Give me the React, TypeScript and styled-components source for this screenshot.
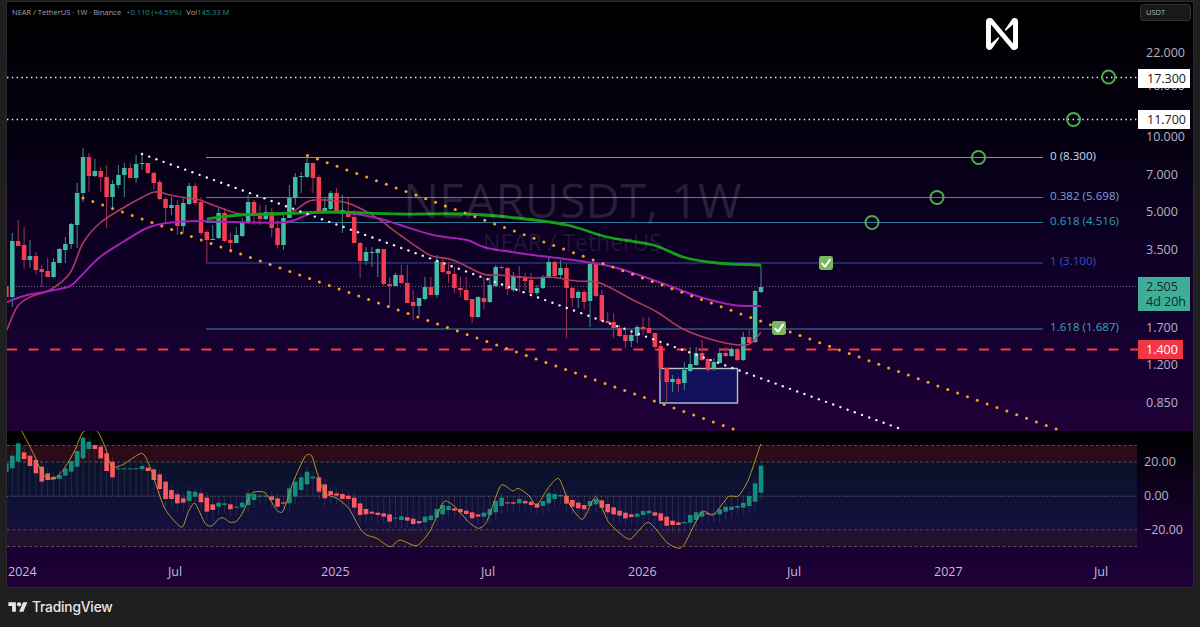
import React from "react";
import styled, { createGlobalStyle } from "styled-components";

const Global = createGlobalStyle`
  html, body { margin: 0; padding: 0; background: #1f1f1f; }
  #root { width: 1200px; height: 627px; overflow: hidden; }
`;

const FONT = `"Open Sans", "Noto Sans", sans-serif`;

const Page = styled.div`
  width: 1200px;
  height: 627px;
  box-sizing: border-box;
  padding: 2px 7px 0;
  display: flex;
  flex-direction: column;
  background: #1f1f1f;
  font-family: ${FONT};
`;
const Frame = styled.div`
  width: 1186px;
  height: 585px;
  display: flex;
  flex-direction: column;
  outline: 1px solid #2b2b2b;
`;
const MainPane = styled.section`
  height: 429px;
  display: flex;
  background: linear-gradient(180deg, #000 0%, #050010 30%, #10002a 65%, #1f0038 100%);
`;
const SubPane = styled.section`
  height: 156px;
  display: flex;
  flex-direction: column;
  background: linear-gradient(180deg, #000 0%, #0c0018 30%, #180030 65%, #1f0038 100%);
`;
const SubRow = styled.div`
  height: 127px;
  display: flex;
`;
const Plot = styled.div`
  position: relative;
  width: 1131px;
  flex: none;
  overflow: hidden;
`;
const Drawing = styled.svg`
  display: block;
  width: 100%;
  height: 100%;
`;
const Scale = styled.div`
  flex: 1;
  display: flex;
  flex-direction: column;
  color: #b6b3c2;
  font-size: 12.5px;
`;
const SubScale = styled(Scale)`
  padding: 25px 0 0 6px;
  gap: 22px;
`;
const Tick = styled.span<{ $mt?: number }>`
  margin: ${(p) => p.$mt ?? 0}px 0 0 8px;
  height: 12px;
  line-height: 12px;
  white-space: nowrap;
`;
const SubTick = styled.span`
  height: 12px;
  line-height: 12px;
  white-space: nowrap;
`;
const TickGroup = styled.div`
  display: flex;
  flex-direction: column;
  gap: 25.67px;
  padding-top: 2.5px;
`;
const HiddenTick = styled.span`
  height: 4.5px;
  margin: 0 0 18px 8px;
  overflow: hidden;
  display: flex;
  align-items: flex-end;
  line-height: 12px;
`;
const WhiteTag = styled.div<{ $mt?: number }>`
  margin-top: ${(p) => p.$mt ?? 0}px;
  width: 52px;
  height: 18.5px;
  flex: none;
  background: #fff;
  color: #131722;
  line-height: 19px;
  padding-left: 9px;
  box-sizing: border-box;
`;
const LastTag = styled.div`
  margin-top: 21px;
  width: 52px;
  height: 34px;
  flex: none;
  background: #3fae98;
  color: #0b2d2a;
  line-height: 15px;
  padding: 2px 0 0 8px;
  box-sizing: border-box;
`;
const RedTag = styled.div`
  margin-top: 6px;
  width: 45px;
  height: 19px;
  flex: none;
  background: #f23645;
  color: #fff;
  font-weight: 500;
  line-height: 19px;
  padding-left: 8px;
  box-sizing: border-box;
`;
const CurrencyBox = styled.div`
  margin: 2px 0 26px 2px;
  width: 51px;
  height: 17px;
  flex: none;
  box-sizing: border-box;
  background: #191919;
  border: 1px solid #313131;
  border-radius: 3px;
  color: #b8b8b8;
  font-size: 7.5px;
  line-height: 15px;
  padding-left: 5px;
`;
const Legend = styled.div`
  position: absolute;
  left: 5px;
  top: 5px;
  display: flex;
  gap: 5px;
  font-size: 7.5px;
  line-height: 11px;
  color: #a4a6ae;
  white-space: nowrap;
`;
const Up = styled.span`
  color: #2f8f7c;
`;
const Watermark = styled.div`
  position: absolute;
  left: 0;
  top: 174px;
  width: 1131px;
  text-align: center;
  color: rgba(255, 255, 255, 0.12);
  font-size: 47.5px;
  line-height: 48px;
  white-space: nowrap;
`;
const WatermarkSub = styled.div`
  position: absolute;
  left: 0;
  top: 228px;
  width: 1131px;
  text-align: center;
  color: rgba(255, 255, 255, 0.1);
  font-size: 23px;
  line-height: 24px;
  white-space: nowrap;
`;
const TimeAxis = styled.div`
  flex: 1;
  display: grid;
  grid-template-columns: 160px 153px 160px 147px 159px 147px 160px auto;
  padding: 5px 0 0 1px;
  color: #c3bcd6;
  font-size: 12.5px;
  line-height: 18px;
`;
const Footer = styled.footer`
  height: 40px;
  display: flex;
  align-items: center;
  gap: 4px;
  padding-left: 1px;
  color: #e6e6e6;
`;
const TvMark = styled.svg`
  width: 20px;
  height: 15px;
  fill: #e6e6e6;
`;
const TvWord = styled.span`
  font-family: Inter, sans-serif;
  font-weight: 500;
  font-size: 13.8px;
  letter-spacing: -0.2px;
`;

type P = [number, number];
const smooth = (pts: P[], k = 6) => {
  let d = `M${pts[0][0]} ${pts[0][1]}`;
  for (let i = 0; i < pts.length - 1; i++) {
    const p0 = pts[Math.max(0, i - 1)];
    const p1 = pts[i];
    const p2 = pts[i + 1];
    const p3 = pts[Math.min(pts.length - 1, i + 2)];
    const c1x = p1[0] + (p2[0] - p0[0]) / k;
    const c1y = p1[1] + (p2[1] - p0[1]) / k;
    const c2x = p2[0] - (p3[0] - p1[0]) / k;
    const c2y = p2[1] - (p3[1] - p1[1]) / k;
    d += `C${c1x.toFixed(1)} ${c1y.toFixed(1)} ${c2x.toFixed(1)} ${c2y.toFixed(1)} ${p2[0]} ${p2[1]}`;
  }
  return d;
};

// colour (1 up, 0 down), wick top, body top, body bottom, wick bottom
const candles: [number, number, number, number, number][] = [
  [0,282,286,297,300],[1,233,241,297,307],[0,220,241,246,246],[0,227,245,260,269],[1,240,256,260,268],[0,252,256,270,274],[0,265,269,272,287],[0,258,271,277,277],[1,258,262,277,278],[1,248,249,263,263],[1,237,244,250,263],[1,223,224,244,249],[1,183,193,225,248],[1,148,157,193,202],[0,153,157,176,192],[1,159,171,176,177],[0,167,171,177,192],[0,165,177,197,228],[1,180,184,197,210],[1,165,175,185,188],[1,163,168,175,197],[0,163,168,178,178],[1,155,164,178,183],[1,154,163,164,170],[0,163,163,173,174],[0,172,173,183,190],[0,180,182,199,200],[0,197,199,208,223],[1,197,205,208,215],[0,200,205,226,235],[1,198,203,226,233],[1,183,186,204,205],[0,183,186,203,205],[0,197,202,233,235],[0,230,232,240,263],[1,225,239,240,240],[1,207,213,238,239],[0,208,213,241,242],[0,233,240,243,253],[1,227,235,243,243],[1,218,223,236,237],[1,195,202,223,224],[0,200,202,214,225],[0,205,213,219,225],[1,205,212,219,220],[0,208,212,228,237],[0,220,228,245,248],[1,213,218,245,250],[1,185,198,218,218],[1,173,177,198,205],[1,172,176,177,193],[1,155,163,177,178],[0,163,163,178,193],[0,175,177,212,208],[1,198,208,211,213],[1,191,193,209,210],[0,188,193,211,213],[1,195,210,212,233],[0,198,212,217,217],[0,210,217,243,243],[0,242,243,261,278],[1,247,252,261,265],[1,247,252,253,267],[1,248,249,253,277],[0,249,249,284,286],[0,277,284,286,305],[1,273,275,286,286],[0,265,275,283,284],[0,265,283,303,303],[0,290,302,306,320],[1,298,298,306,315],[1,277,287,299,300],[0,277,287,295,295],[1,255,261,295,298],[0,257,262,272,273],[0,262,271,274,283],[0,267,274,288,293],[0,277,288,290,297],[0,277,290,300,301],[0,299,299,317,323],[1,296,297,317,318],[0,277,298,302,309],[1,277,285,302,303],[1,265,267,286,287],[0,266,267,268,270],[0,267,268,289,295],[1,272,276,290,292],[0,266,276,278,292],[0,273,278,281,290],[0,273,280,293,297],[1,285,288,293,295],[1,275,278,288,289],[1,256,262,278,278],[0,261,262,276,278],[1,260,268,275,278],[0,263,268,288,338],[0,287,288,298,307],[1,290,292,298,308],[0,290,292,302,309],[1,262,264,301,327],[0,262,264,296,297],[0,290,295,321,322],[0,312,321,323,323],[0,313,322,328,338],[0,325,328,336,337],[0,330,335,341,348],[1,330,335,341,347],[1,325,327,336,343],[0,317,327,329,335],[0,317,328,333,333],[0,333,333,347,348],[0,342,346,368,380],[0,367,368,382,402],[1,375,379,382,392],[0,377,379,384,392],[1,362,370,383,390],[1,347,364,371,372],[1,347,353,365,366],[0,340,353,360,361],[0,358,359,370,372],[1,358,362,368,371],[1,348,353,363,363],[0,347,353,356,357],[1,347,349,356,357],[0,348,349,360,361],[1,332,337,360,361],[0,330,337,343,343],[1,290,291,342,343],[1,265,287,292,293],
];

const toY = (z: number) => 425 + z / 3;
const rsi: [number, number, number][] = [
  [1,115,140],[1,92,130],[1,55,110],[0,82,102],[0,92,123],[0,105,145],[0,125,170],[0,145,165],[0,155,163],[1,150,162],[1,130,152],[1,108,140],[1,78,125],[1,38,100],[1,50,72],[0,60,72],[0,65,100],[0,85,138],[0,110,157],[1,130,133],[1,130,132],[1,130,132],[1,130,132],[1,123,133],[0,128,138],[0,133,165],[0,148,192],[0,170,222],[0,195,222],[0,208,235],[0,220,233],[1,198,228],[1,200,215],[0,205,232],[0,218,260],[0,238,255],[1,233,245],[1,235,240],[0,238,253],[1,245,248],[1,233,247],[1,205,240],[1,207,225],[1,212,215],[1,212,214],[0,214,225],[0,220,245],[0,232,236],[1,190,235],[1,170,215],[1,157,195],[1,140,178],[1,155,160],[0,157,200],[0,178,220],[0,198,210],[0,205,212],[0,207,222],[0,212,222],[0,218,248],[0,235,270],[0,252,268],[0,260,266],[0,263,270],[0,265,275],[0,268,290],[1,278,281],
  [1,274,285],[0,277,287],[0,281,297],[0,288,295],[1,275,292],[1,272,285],[1,252,278],[1,240,268],[1,243,255],[0,250,257],[0,252,262],[0,257,267],[0,262,280],[0,268,275],[1,263,275],[1,252,270],[1,228,262],[1,218,243],[0,232,235],[0,232,236],[1,222,235],[0,228,235],[0,230,240],[0,236,248],[1,228,243],[1,205,235],[1,207,222],[1,210,214],[0,212,236],[0,225,245],[0,233,250],[0,240,253],[1,228,243],[1,222,238],[0,226,248],[0,237,262],[0,247,268],[0,257,272],[0,263,280],[0,268,276],[1,266,275],[1,258,270],[1,257,265],[0,262,272],[0,265,287],[0,275,302],[0,287,300],[0,292,300],[1,291,295],[1,270,293],[1,262,285],[1,260,275],[0,265,268],[1,265,268],[1,253,268],[1,245,260],[1,245,255],[1,243,248],[1,233,248],[1,213,243],[1,175,230],[1,122,203],
];

const ma20: P[] = [[7,330],[17,307],[30,297],[50,290],[70,273],[83,243],[100,223],[123,208],[137,200],[155,192],[170,195],[187,198],[200,200],[213,205],[240,214],[267,215],[290,213],[307,202],[317,200],[337,201],[353,205],[377,218],[400,235],[417,247],[432,256],[453,260],[483,274],[500,275],[533,278],[550,277],[577,281],[600,283],[633,300],[657,312],[683,329],[717,341],[747,345],[761,332]];
const ma50: P[] = [[7,302],[27,295],[50,291],[70,286],[80,277],[100,257],[123,242],[147,228],[167,223],[200,221],[233,222],[287,222],[313,213],[347,213],[377,218],[400,225],[433,235],[467,240],[487,248],[533,255],[573,260],[617,268],[667,285],[700,297],[733,305],[761,306]];
const ma200: P[] = [[207,219],[240,215],[300,213],[333,212],[400,214],[467,214],[517,218],[567,225],[607,237],[653,245],[683,257],[717,263],[761,265]];

const z6: P[] = [[40,-40],[65,17],[100,85],[130,150],[160,162],[190,135],[225,75],[250,20],[290,17],[315,65],[335,125],[370,118],[425,85],[450,125],[480,215],[500,260],[545,307],[565,260],[585,235],[615,295],[635,303],[655,283],[670,278],[690,292],[710,288],[730,260],[755,205],[795,203],[830,255],[850,257],[880,170],[915,95],[935,93],[955,155],[975,205],[1010,220],[1045,248],[1080,310],[1100,330],[1130,340],[1170,365]];
const z7: P[] = [[0,345],[50,362],[90,318],[125,240],[140,228],[170,250],[205,290],[235,310],[260,290],[302,182],[338,198],[355,190],[385,210],[410,240],[440,195],[465,165],[480,165],[510,240],[548,283],[587,215],[625,290],[660,325],[692,342],[745,292],[800,352],[835,370],[855,355],[905,260],[940,270],[985,215],[1015,213],[1045,165],[1082,57]];
const rsiLine: P[] = [
  ...z6.map(([x, y]) => [+(x / 3).toFixed(1), +toY(y).toFixed(1)] as P),
  ...z7.map(([x, y]) => [+(400 + x / 3).toFixed(1), +toY(y).toFixed(1)] as P),
];

const dotsOn = (x0: number, y0: number, x1: number, y1: number, step: number) => {
  const out: P[] = [];
  const slope = (y1 - y0) / (x1 - x0);
  for (let x = x0; x <= x1; x += step) out.push([x, y0 + (x - x0) * slope]);
  return out;
};
const whiteDots = dotsOn(142, 154, 905, 430.5, 7.2);
const upperDots = dotsOn(307.5, 155.5, 1060, 430.5, 9.85);
const lowerDots = dotsOn(83, 198, 737, 430.5, 9.85);

const fibs = [
  { y: 157.5, line: "#8d90a2", text: "#c6dcec", label: "0 (8.300)" },
  { y: 197.5, line: "#65769e", text: "#7f9fd6", label: "0.382 (5.698)" },
  { y: 222.5, line: "#337a96", text: "#2e9cba", label: "0.618 (4.516)" },
  { y: 263, line: "#3a4da2", text: "#3450c4", label: "1 (3.100)" },
  { y: 329, line: "#3a8698", text: "#36a6b8", label: "1.618 (1.687)" },
];
const circles: P[] = [[1108.5, 77],[1073.5, 119.5],[978.5, 157.5],[937, 197.5],[872, 222.5]];
const checks: P[] = [[826, 263],[779, 328]];

const GREEN = "#3fbca4";
const RED = "#f23e50";
const TEAL = "#0f8f7e";
const SALMON = "#fb5a62";
const mainX = (i: number) => 761 - (candles.length - 1 - i) * ((761 - 12.3) / (candles.length - 2));
const subX = (i: number) => 761 - (rsi.length - 1 - i) * ((761 - 12.3) / (rsi.length - 2));

const NearLogo = () => (
  <path
    transform="translate(986 18) scale(0.3556)"
    fill="#fff"
    d="M72.2 4.6L53.4 32.5c-1.3 1.9 1.2 4.2 3 2.6L74.9 19c.5-.4 1.2-.1 1.2.6v50.3c0 .7-.9 1-1.3.5l-56-67C17 1.2 14.4 0 11.5 0h-2C4.3 0 0 4.3 0 9.6v70.8C0 85.7 4.3 90 9.6 90c3.3 0 6.4-1.7 8.2-4.6l18.8-27.9c1.3-1.9-1.2-4.2-3-2.6L15.1 70.9c-.5.4-1.2.1-1.2-.6V20.1c0-.7.9-1 1.3-.5l56 67c1.8 2.2 4.5 3.4 7.3 3.4h2c5.3 0 9.6-4.3 9.6-9.6V9.6C90 4.3 85.7 0 80.4 0c-3.4 0-6.5 1.7-8.2 4.6z"
  />
);

const MainDrawing = () => (
  <Drawing viewBox="7 2 1131 429">
    <rect x={660} y={368.5} width={77.5} height={34.5} fill="#12105a" stroke="#b4c2c6" strokeWidth={1.4} />
    <line x1={7} x2={1138} y1={77.5} y2={77.5} stroke="#f2f2f2" strokeWidth={1.3} strokeDasharray="1.4 3.4" />
    <line x1={7} x2={1138} y1={119.5} y2={119.5} stroke="#f2f2f2" strokeWidth={1.3} strokeDasharray="1.4 3.4" />
    <line x1={7} x2={1138} y1={286.5} y2={286.5} stroke="#8a8494" strokeWidth={0.8} strokeDasharray="1 2" />
    {fibs.map((f) => (
      <line key={f.y} x1={206} x2={1043} y1={f.y} y2={f.y} stroke={f.line} strokeWidth={1.1} />
    ))}
    {fibs.map((f) => (
      <text key={f.label} x={1050} y={f.y + 2} fill={f.text} fontSize={11.6} fontWeight={500} fontFamily={FONT}>
        {f.label}
      </text>
    ))}
    <line x1={7} x2={1138} y1={349.5} y2={349.5} stroke={RED} strokeWidth={1.8} strokeDasharray="10 11.6" />
    {candles.map(([up, wt, bt, bb, wb], i) => {
      const x = mainX(i);
      return (
        <g key={i}>
          <line x1={x} x2={x} y1={wt} y2={wb} stroke={up ? "#3a7f7e" : "#96304a"} strokeWidth={1.1} />
          <rect x={x - 2.25} y={bt} width={4.5} height={Math.max(1, bb - bt)} fill={up ? GREEN : RED} />
        </g>
      );
    })}
    <path d={smooth(ma20)} fill="none" stroke="#ad3c5c" strokeWidth={1.6} />
    <path d={smooth(ma50)} fill="none" stroke="#a81fb6" strokeWidth={2} />
    <path d={smooth(ma200)} fill="none" stroke="#14a014" strokeWidth={2.8} />
    {upperDots.concat(lowerDots).map(([x, y], i) => (
      <circle key={i} cx={x} cy={y} r={1.5} fill="#f5a02a" />
    ))}
    {whiteDots.map(([x, y], i) => (
      <circle key={i} cx={x} cy={y} r={1.2} fill="#f2f2f6" />
    ))}
    {circles.map(([x, y]) => (
      <circle key={x} cx={x} cy={y} r={6.5} fill="none" stroke="#4caf50" strokeWidth={2} />
    ))}
    {checks.map(([x, y]) => (
      <g key={x} transform={`translate(${x - 7} ${y - 7})`}>
        <rect width={14} height={14} rx={2.4} fill="#78b85e" />
        <path d="M3.2 7.6 L6 10.6 L11 3.6" fill="none" stroke="#fff" strokeWidth={2} strokeLinecap="round" strokeLinejoin="round" />
      </g>
    ))}
    <NearLogo />
  </Drawing>
);

const SubDrawing = () => (
  <Drawing viewBox="7 431 1131 127">
    <rect x={7} y={445.5} width={1130} height={16.5} fill="#290c18" />
    <linearGradient id="midBand" x1="0" x2="0" y1="0" y2="1">
      <stop offset="0" stopColor="#0a1228" />
      <stop offset="1" stopColor="#141040" />
    </linearGradient>
    <rect x={7} y={462} width={1130} height={68} fill="url(#midBand)" />
    <rect x={7} y={530} width={1130} height={16.5} fill="#21102e" />
    {[445.5, 462, 529.8, 546.5].map((y) => (
      <line key={y} x1={7} x2={1137} y1={y} y2={y} stroke="#6c5c6c" strokeWidth={0.8} strokeDasharray="3 2.5" />
    ))}
    <line x1={7} x2={1137} y1={496.2} y2={496.2} stroke="#8d8894" strokeWidth={0.8} strokeDasharray="1 1.6" />
    {rsi.map(([, t, b], i) => {
      const x = subX(i);
      const y0 = Math.min(toY(t) - 5, 496);
      const y1 = Math.max(toY(b) + 8, 496);
      return <line key={i} x1={x} x2={x} y1={y0} y2={y1} stroke="#c8c8dc" strokeOpacity={0.18} strokeWidth={0.8} />;
    })}
    {rsi.map(([up, t, b], i) => (
      <rect key={i} x={subX(i) - 2.3} y={toY(t)} width={4.6} height={Math.max(1, (b - t) / 3)} fill={up ? TEAL : SALMON} />
    ))}
    <path d={smooth(rsiLine, 9)} fill="none" stroke="#b8952c" strokeWidth={1} />
  </Drawing>
);

export default function App() {
  return (
    <Page>
      <Global />
      <Frame>
        <MainPane>
          <Plot>
            <MainDrawing />
            <Watermark>NEARUSDT, 1W</Watermark>
            <WatermarkSub>NEAR / TetherUS</WatermarkSub>
            <Legend>
              <span>NEAR / TetherUS · 1W · Binance</span>
              <Up>+0.110 (+4.59%)</Up>
              <span>
                Vol<Up>145.33 M</Up>
              </span>
            </Legend>
          </Plot>
          <Scale>
            <CurrencyBox>USDT</CurrencyBox>
            <Tick>22.000</Tick>
            <WhiteTag $mt={10}>17.300</WhiteTag>
            <HiddenTick>16.000</HiddenTick>
            <WhiteTag>11.700</WhiteTag>
            <TickGroup>
              <Tick>10.000</Tick>
              <Tick>7.000</Tick>
              <Tick>5.000</Tick>
              <Tick>3.500</Tick>
            </TickGroup>
            <LastTag>
              2.505
              <br />
              4d 20h
            </LastTag>
            <Tick $mt={11}>1.700</Tick>
            <RedTag>1.400</RedTag>
            <Tick>1.200</Tick>
            <Tick $mt={26}>0.850</Tick>
          </Scale>
        </MainPane>
        <SubPane>
          <SubRow>
            <Plot>
              <SubDrawing />
            </Plot>
            <SubScale>
              <SubTick>20.00</SubTick>
              <SubTick>0.00</SubTick>
              <SubTick>−20.00</SubTick>
            </SubScale>
          </SubRow>
          <TimeAxis>
            <span>2024</span>
            <span>Jul</span>
            <span>2025</span>
            <span>Jul</span>
            <span>2026</span>
            <span>Jul</span>
            <span>2027</span>
            <span>Jul</span>
          </TimeAxis>
        </SubPane>
      </Frame>
      <Footer>
        <TvMark viewBox="0 0 36 28">
          <path d="M14 22H7V11H0V4h14v18zM28 22h-8l7.5-18h8L28 22z" />
          <circle cx="20" cy="8" r="4" />
        </TvMark>
        <TvWord>TradingView</TvWord>
      </Footer>
    </Page>
  );
}
